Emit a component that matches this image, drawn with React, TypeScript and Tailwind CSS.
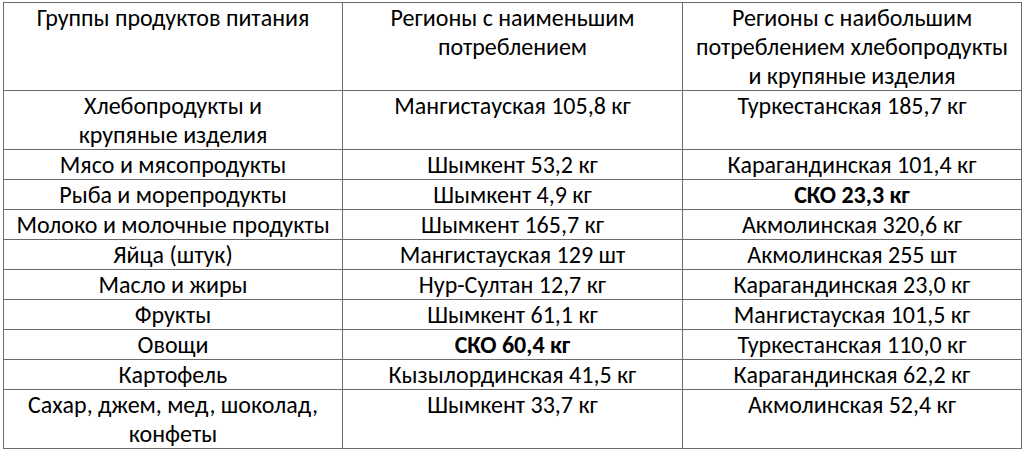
import React from 'react';

type Row = { group: string[]; min: string; max: string; minBold?: boolean; maxBold?: boolean };

const rows: Row[] = [
  { group: ['Хлебопродукты и', 'крупяные изделия'], min: 'Мангистауская 105,8 кг', max: 'Туркестанская 185,7 кг' },
  { group: ['Мясо и мясопродукты'], min: 'Шымкент 53,2 кг', max: 'Карагандинская 101,4 кг' },
  { group: ['Рыба и морепродукты'], min: 'Шымкент 4,9 кг', max: 'СКО 23,3 кг', maxBold: true },
  { group: ['Молоко и молочные продукты'], min: 'Шымкент 165,7 кг', max: 'Акмолинская 320,6 кг' },
  { group: ['Яйца (штук)'], min: 'Мангистауская 129 шт', max: 'Акмолинская 255 шт' },
  { group: ['Масло и жиры'], min: 'Нур-Султан 12,7 кг', max: 'Карагандинская 23,0 кг' },
  { group: ['Фрукты'], min: 'Шымкент 61,1 кг', max: 'Мангистауская 101,5 кг' },
  { group: ['Овощи'], min: 'СКО 60,4 кг', max: 'Туркестанская 110,0 кг', minBold: true },
  { group: ['Картофель'], min: 'Кызылординская 41,5 кг', max: 'Карагандинская 62,2 кг' },
  { group: ['Сахар, джем, мед, шоколад,', 'конфеты'], min: 'Шымкент 33,7 кг', max: 'Акмолинская 52,4 кг' },
];

const cell = 'border border-[#6b6b6b] align-top text-center px-0 leading-[29px] whitespace-nowrap';

function Lines({ lines }: { lines: string[] }) {
  return (
    <>
      {lines.map((l, i) => (
        <React.Fragment key={i}>
          {i > 0 && <br />}
          {l}
        </React.Fragment>
      ))}
    </>
  );
}

export default function App() {
  return (
    <div className="w-[1024px] h-[453px] bg-white pt-[2px] pl-[3px] overflow-hidden" style={{ fontFamily: 'Carlito, Lato, "Noto Sans", sans-serif' }}>
      <table className="table-fixed border-collapse text-[24px] text-black">
        <colgroup>
          <col className="w-[339px]" />
          <col className="w-[340px]" />
          <col className="w-[339px]" />
        </colgroup>
        <thead>
          <tr>
            <td className={`${cell} h-[88px]`}>Группы продуктов питания</td>
            <td className={cell}>
              <Lines lines={['Регионы с наименьшим', 'потреблением']} />
            </td>
            <td className={cell}>
              <Lines lines={['Регионы с наибольшим', 'потреблением хлебопродукты', 'и крупяные изделия']} />
            </td>
          </tr>
        </thead>
        <tbody>
          {rows.map((r) => (
            <tr key={r.group[0]}>
              <td className={cell}>
                <Lines lines={r.group} />
              </td>
              <td className={`${cell} ${r.minBold ? 'font-bold' : ''}`}>{r.min}</td>
              <td className={`${cell} ${r.maxBold ? 'font-bold' : ''}`}>{r.max}</td>
            </tr>
          ))}
        </tbody>
      </table>
    </div>
  );
}
